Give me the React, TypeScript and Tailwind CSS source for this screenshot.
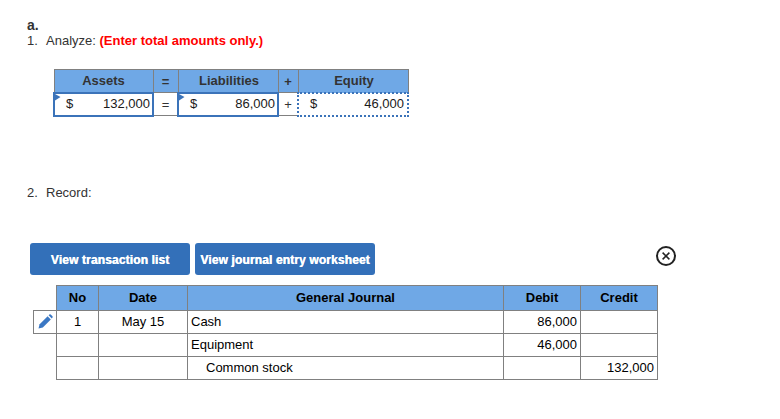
function Flag() {
  return (
    <svg className="absolute left-0 top-0" width="6" height="7" viewBox="0 0 6 7">
      <path d="M0 0 L5.5 3 L0 6.5 Z" fill="#3b73b9" />
    </svg>
  );
}

function Amount({ value, kind }: { value: string; kind: "solid" | "dotted" }) {
  return (
    <td
      className={
        kind === "solid"
          ? "relative border-2 border-[#3b73b9] p-0 h-[22px]"
          : "relative border-2 border-dotted border-[#3b73b9] p-0 h-[22px]"
      }
    >
      {kind === "solid" && <Flag />}
      <div
        className={
          kind === "solid"
            ? "flex justify-between -mt-[1px] pl-[11px] pr-[2px] text-[#1a1a1a]"
            : "flex justify-between -mt-[1px] pl-[11px] pr-[3px] text-[#1a1a1a]"
        }
      >
        <span>$</span>
        <span>{value}</span>
      </div>
    </td>
  );
}

function Pencil() {
  return (
    <svg width="15" height="15" viewBox="0 0 15 15">
      <path d="M0.5 14.5 L1.6 10.2 L9.6 2.2 L12.8 5.4 L4.8 13.4 Z" fill="#3b78c4" />
      <path d="M10.6 1.2 L11.4 0.5 Q12 0 12.7 0.5 L14.5 2.3 Q15 3 14.5 3.6 L13.8 4.4 Z" fill="#3b78c4" />
    </svg>
  );
}

const th = "border border-[#808080] bg-[#6fa8e6] font-bold text-center p-0";
const td = "border border-[#808080] p-0 h-[23px]";
const btn =
  "h-[32px] pt-[3px] rounded-[3px] bg-[#3370b9] text-white font-bold text-[12px] tracking-[0.13px] [text-shadow:0.4px_0_0_#fff]";

export default function App() {
  return (
    <div className="w-[780px] h-[419px] bg-white overflow-hidden font-['Liberation_Sans',Arial,sans-serif] text-[13px] leading-[15px] text-[#333] pl-[27px] pt-[18px]">
      <div className="font-bold text-[14px]">a.</div>
      <div className="flex">
        <span className="w-[19px]">1.</span>
        <span>
          Analyze: <span className="font-bold text-[#f00]">(Enter total amounts only.)</span>
        </span>
      </div>

      <table className="ml-[26px] mt-[21px] w-[354px] table-fixed border-collapse">
        <colgroup>
          <col className="w-[99px]" />
          <col className="w-[25px]" />
          <col className="w-[100px]" />
          <col className="w-[20px]" />
          <col className="w-[110px]" />
        </colgroup>
        <thead>
          <tr className="h-[23px]">
            <th className={th}>Assets</th>
            <th className={th}>=</th>
            <th className={`${th} pl-[2px]`}>Liabilities</th>
            <th className={th}>+</th>
            <th className={`${th} pl-[2px]`}>Equity</th>
          </tr>
        </thead>
        <tbody>
          <tr>
            <Amount value="132,000" kind="solid" />
            <td className={`${td} text-center`}>=</td>
            <Amount value="86,000" kind="solid" />
            <td className={`${td} text-center`}>+</td>
            <Amount value="46,000" kind="dotted" />
          </tr>
        </tbody>
      </table>

      <div className="flex mt-[68px]">
        <span className="w-[19px]">2.</span>
        <span>Record:</span>
      </div>

      <div className="flex items-center mt-[43px] ml-[3px] w-[646px]">
        <button className={`${btn} w-[160px]`}>View transaction list</button>
        <button className={`${btn} w-[180px] ml-[5px]`}>View journal entry worksheet</button>
        <svg className="ml-auto -mt-[5px]" width="20" height="20" viewBox="0 0 20 20" fill="none" stroke="#222">
          <circle cx="10" cy="10" r="9" strokeWidth="2" />
          <path d="M6.6 6.6 L13.4 13.4 M13.4 6.6 L6.6 13.4" strokeWidth="1.5" />
        </svg>
      </div>

      <div className="flex mt-[10px] ml-[6px] text-black">
        <div className="w-[23px] shrink-0 flex flex-col">
          <div className="h-[25px]" />
          <div className="h-[24px] border border-r-0 border-[#808080] flex items-center justify-center">
            <Pencil />
          </div>
        </div>
        <table className="w-[602px] table-fixed border-collapse">
          <colgroup>
            <col className="w-[42px]" />
            <col className="w-[89px]" />
            <col className="w-[316px]" />
            <col className="w-[77px]" />
            <col className="w-[77px]" />
          </colgroup>
          <thead>
            <tr className="h-[25px]">
              <th className={th}>No</th>
              <th className={th}>Date</th>
              <th className={th}>General Journal</th>
              <th className={th}>Debit</th>
              <th className={th}>Credit</th>
            </tr>
          </thead>
          <tbody>
            <tr>
              <td className={`${td} text-center`}>1</td>
              <td className={`${td} text-center`}>May 15</td>
              <td className={`${td} pl-[3px]`}>Cash</td>
              <td className={`${td} text-right pr-[3px]`}>86,000</td>
              <td className={td}></td>
            </tr>
            <tr>
              <td className={td}></td>
              <td className={td}></td>
              <td className={`${td} pl-[3px]`}>Equipment</td>
              <td className={`${td} text-right pr-[3px]`}>46,000</td>
              <td className={td}></td>
            </tr>
            <tr>
              <td className={td}></td>
              <td className={td}></td>
              <td className={`${td} pl-[18px]`}>Common stock</td>
              <td className={td}></td>
              <td className={`${td} text-right pr-[3px]`}>132,000</td>
            </tr>
          </tbody>
        </table>
      </div>
    </div>
  );
}
